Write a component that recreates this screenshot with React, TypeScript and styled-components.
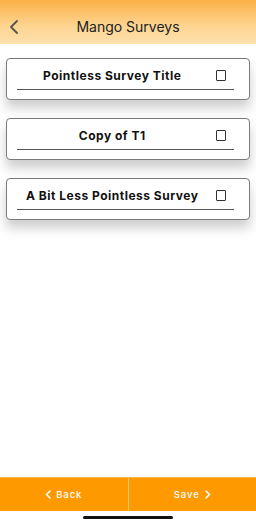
import React from "react"
import styled, { createGlobalStyle } from "styled-components"

const GlobalStyle = createGlobalStyle`
  html, body {
    margin: 0;
    padding: 0;
    background: #ffffff;
    font-family: "Inter", "Liberation Sans", sans-serif;
  }
`

const Screen = styled.div`
  width: 256px;
  height: 524px;
  display: flex;
  flex-direction: column;
  background: #ffffff;
  overflow: hidden;
`

const Header = styled.header`
  height: 44px;
  flex-shrink: 0;
  display: grid;
  grid-template-columns: 40px 1fr 40px;
  align-items: center;
  background: linear-gradient(180deg, #fbb145 0%, #fdd592 60%, #fee0ad 100%);
`

const BackIcon = styled.div`
  display: flex;
  align-items: center;
  padding-left: 9px;
  padding-top: 9px;
`

const Title = styled.h1`
  margin: 0;
  padding-top: 8px;
  text-align: center;
  font-size: 14px;
  font-weight: 400;
  color: #222;
`

const List = styled.main`
  flex: 1;
  display: flex;
  flex-direction: column;
  gap: 18px;
  padding: 14px 6px 0 6px;
`

const Card = styled.div`
  height: 40px;
  border: 1px solid #7a7a7a;
  border-radius: 4px;
  background: #fff;
  box-shadow: 0 8px 12px rgba(0, 0, 0, 0.2);
  padding: 0 15px 0 10px;
  display: flex;
  flex-direction: column;
`

const CardRow = styled.div`
  height: 30px;
  display: flex;
  align-items: center;
  padding-top: 3px;
  box-sizing: border-box;
`

const CardTitle = styled.div`
  flex: 1;
  text-align: center;
  font-size: 12px;
  font-weight: 700;
  letter-spacing: 0.5px;
  color: #111;
`

const Check = styled.div`
  width: 8.5px;
  height: 8.5px;
  border: 1.5px solid #333;
  border-radius: 1px;
  margin: 0 8px 0 8px;
`

const Underline = styled.div`
  height: 1px;
  background: #555;
`

const Footer = styled.footer`
  height: 33px;
  flex-shrink: 0;
  display: grid;
  grid-template-columns: 1fr 1px 1fr;
  background: #ff9900;
  border-top: 1px solid #ffb347;
`

const Divider = styled.div`
  background: #ffc070;
`

const FooterButton = styled.button`
  border: none;
  background: transparent;
  color: #fff;
  font-family: "Inter", "Liberation Sans", sans-serif;
  font-size: 9.5px;
  font-weight: 500;
  letter-spacing: 0.9px;
  display: flex;
  align-items: center;
  justify-content: center;
  gap: 5px;
  padding: 0;
`

const HomeArea = styled.div`
  height: 13px;
  flex-shrink: 0;
  display: flex;
  justify-content: center;
  padding-top: 5px;
  box-sizing: border-box;
`

const HomeBar = styled.div`
  width: 90px;
  height: 3px;
  border-radius: 2px;
  background: #111;
`

const surveys = ["Pointless Survey Title", "Copy of T1", "A Bit Less Pointless Survey"]

export default function App() {
  return (
    <>
      <GlobalStyle />
      <Screen>
        <Header>
          <BackIcon>
            <svg width="10" height="14" viewBox="0 0 10 14">
              <path d="M8 1 L2 7 L8 13" fill="none" stroke="#555" strokeWidth="1.8" strokeLinecap="round" strokeLinejoin="round" />
            </svg>
          </BackIcon>
          <Title>Mango Surveys</Title>
          <div />
        </Header>
        <List>
          {surveys.map((s) => (
            <Card key={s}>
              <CardRow>
                <CardTitle>{s}</CardTitle>
                <Check />
              </CardRow>
              <Underline />
            </Card>
          ))}
        </List>
        <Footer>
          <FooterButton>
            <svg width="6" height="9" viewBox="0 0 6 9">
              <path d="M5 1 L1.5 4.5 L5 8" fill="none" stroke="#fff" strokeWidth="1.6" strokeLinecap="round" strokeLinejoin="round" />
            </svg>
            Back
          </FooterButton>
          <Divider />
          <FooterButton>
            Save
            <svg width="6" height="9" viewBox="0 0 6 9">
              <path d="M1 1 L4.5 4.5 L1 8" fill="none" stroke="#fff" strokeWidth="1.6" strokeLinecap="round" strokeLinejoin="round" />
            </svg>
          </FooterButton>
        </Footer>
        <HomeArea>
          <HomeBar />
        </HomeArea>
      </Screen>
    </>
  )
}
